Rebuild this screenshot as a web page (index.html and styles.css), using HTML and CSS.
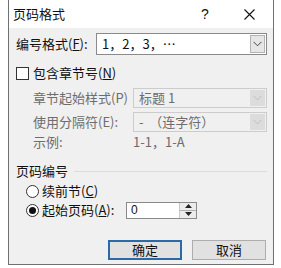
FILE: index.html
```html
<!DOCTYPE html>
<html lang="zh-CN">

<head>
    <meta charset="UTF-8">
    <title>页码格式</title>
    <link rel="stylesheet" href="styles.css">
</head>

<body>
    <div class="dialog">
        <div class="titlebar">
            <span class="title">页码格式</span>
            <span class="help">?</span>
            <span class="close">
                <svg width="11" height="11" viewBox="0 0 11 11"><path d="M0.5 0.5L10.5 10.5M10.5 0.5L0.5 10.5" stroke="#111" stroke-width="1.1" fill="none"/></svg>
            </span>
        </div>

        <div class="content">
            <div class="row format-row">
                <span class="format-label">编号格式(<u>F</u>):</span>
                <div class="combo">
                    <span class="combo-text">1，2，3，…</span>
                    <span class="combo-btn">
                        <svg width="9" height="6" viewBox="0 0 9 6"><path d="M0.5 0.8L4.5 4.8L8.5 0.8" stroke="#444" stroke-width="1" fill="none"/></svg>
                    </span>
                </div>
            </div>

            <div class="check-row">
                <span class="checkbox"></span>
                <span>包含章节号(<u>N</u>)</span>
            </div>

            <div class="chapter">
                <div class="row field-row">
                    <span class="field-label">章节起始样式(P)</span>
                    <div class="combo combo-disabled">
                        <span class="combo-text">标题 1</span>
                        <span class="combo-btn">
                            <svg width="9" height="6" viewBox="0 0 9 6"><path d="M0.5 0.8L4.5 4.8L8.5 0.8" stroke="#bdbdbd" stroke-width="1" fill="none"/></svg>
                        </span>
                    </div>
                </div>
                <div class="row field-row">
                    <span class="field-label">使用分隔符(E):</span>
                    <div class="combo combo-disabled">
                        <span class="combo-text">-&nbsp;&nbsp;（连字符）</span>
                        <span class="combo-btn">
                            <svg width="9" height="6" viewBox="0 0 9 6"><path d="M0.5 0.8L4.5 4.8L8.5 0.8" stroke="#bdbdbd" stroke-width="1" fill="none"/></svg>
                        </span>
                    </div>
                </div>
                <div class="row example-row">
                    <span class="field-label">示例:</span>
                    <span>1-1，1-A</span>
                </div>
            </div>

            <div class="group-title">
                <span>页码编号</span>
                <span class="group-line"></span>
            </div>

            <div class="radio-row">
                <span class="radio"></span>
                <span>续前节(<u>C</u>)</span>
            </div>
            <div class="radio-row start-row">
                <span class="radio checked"></span>
                <span class="start-label">起始页码(<u>A</u>):</span>
                <div class="spin">
                    <span class="spin-text">0</span>
                    <span class="spin-btns">
                        <span class="spin-btn">
                            <svg width="7" height="4" viewBox="0 0 7 4"><path d="M0 4L3.5 0L7 4Z" fill="#222"/></svg>
                        </span>
                        <span class="spin-btn">
                            <svg width="7" height="4" viewBox="0 0 7 4"><path d="M0 0L3.5 4L7 0Z" fill="#222"/></svg>
                        </span>
                    </span>
                </div>
            </div>

            <div class="buttons">
                <button class="btn btn-default">确定</button>
                <button class="btn">取消</button>
            </div>
        </div>
    </div>
</body>

</html>
```

FILE: styles.css
```css
body {
    margin: 0;
    padding: 0;
    background-color: white;
    font-family: "Noto Sans CJK SC", "Noto Sans", sans-serif;
    font-size: 13px;
    color: #111;
}

.dialog {
    margin-left: 8px;
    width: 264px;
    border: 1px solid #707070;
    border-top: none;
    background-color: #f0f0f0;
}

.titlebar {
    height: 28px;
    display: flex;
    align-items: center;
    padding: 0 9px 0 4px;
    background-color: white;
    font-size: 13px;
    line-height: 16px;
}

.title {
    flex: 1;
}

.help {
    width: 14px;
    text-align: center;
    margin-right: 22px;
    font-family: "Liberation Sans", sans-serif;
    font-size: 14px;
}

.close {
    width: 30px;
    display: flex;
    justify-content: center;
}

.content {
    height: 236px;
    box-sizing: border-box;
    padding: 5px 6px 0 7px;
    line-height: 16px;
}

.row {
    display: flex;
    align-items: center;
}

.format-label {
    width: 80px;
}

.combo {
    flex: 1;
    height: 22px;
    box-sizing: border-box;
    display: flex;
    align-items: center;
    background-color: white;
    border: 1px solid #8a8a8a;
}

.combo-text {
    flex: 1;
    padding-left: 5px;
    font-size: 13px;
}

.combo-btn {
    width: 15px;
    height: 18px;
    margin-right: 1px;
    display: flex;
    align-items: center;
    justify-content: center;
    background-color: #e6e6e6;
    border: 1px solid #b4b4b4;
    box-sizing: border-box;
}

.combo-disabled {
    height: 20px;
    background-color: #f0f0f0;
    border-color: #cccccc;
    color: #6d6d6d;
}

.combo-disabled .combo-btn {
    height: 16px;
    background-color: #dcdcdc;
    border-color: #dcdcdc;
}

.check-row {
    display: flex;
    align-items: center;
    margin-top: 11px;
    height: 14px;
}

.checkbox {
    width: 13px;
    height: 13px;
    box-sizing: border-box;
    border: 1px solid #333;
    background-color: white;
    margin-right: 4px;
}

.chapter {
    padding-left: 17px;
    color: #6d6d6d;
}

.field-row {
    margin-top: 4px;
}

.chapter .field-row:first-child {
    margin-top: 8px;
}

.field-label {
    width: 100px;
}

.example-row {
    margin-top: 2px;
    height: 16px;
}

.group-title {
    display: flex;
    align-items: center;
    margin-top: 13px;
    height: 16px;
}

.group-line {
    flex: 1;
    height: 1px;
    margin: 1px 0 0 6px;
    background-color: #dcdcdc;
}

.radio-row {
    display: flex;
    align-items: center;
    height: 18px;
    padding-left: 10px;
    margin-top: 3px;
}

.start-row {
    margin-top: 1px;
}

.radio {
    width: 13px;
    height: 13px;
    box-sizing: border-box;
    border: 1px solid #333;
    border-radius: 50%;
    background-color: white;
    margin-right: 3px;
    display: flex;
    align-items: center;
    justify-content: center;
}

.radio.checked::after {
    content: "";
    width: 7px;
    height: 7px;
    border-radius: 50%;
    background-color: #111;
}

.start-label {
    width: 84px;
}

.spin {
    width: 71px;
    height: 17px;
    box-sizing: border-box;
    display: flex;
    background-color: white;
    border: 1px solid #8a8a8a;
}

.spin-text {
    flex: 1;
    padding-left: 4px;
    line-height: 15px;
    font-family: "Liberation Sans", sans-serif;
    font-size: 12px;
}

.spin-btns {
    width: 16px;
    display: flex;
    flex-direction: column;
    border-left: 1px solid #c8c8c8;
}

.spin-btn {
    flex: 1;
    display: flex;
    align-items: center;
    justify-content: center;
    background-color: #ececec;
}

.spin-btn + .spin-btn {
    border-top: 1px solid #b0b0b0;
}

.buttons {
    display: flex;
    justify-content: flex-end;
    gap: 10px;
    margin-top: 21px;
    padding-right: 1px;
}

.btn {
    width: 74px;
    height: 20px;
    padding: 0;
    font-family: "Noto Sans CJK SC", sans-serif;
    font-size: 13px;
    line-height: 16px;
    color: #111;
    background-color: #e1e1e1;
    border: 1px solid #adadad;
}

.btn-default {
    border: 2px solid #2a6aa8;
}
```
